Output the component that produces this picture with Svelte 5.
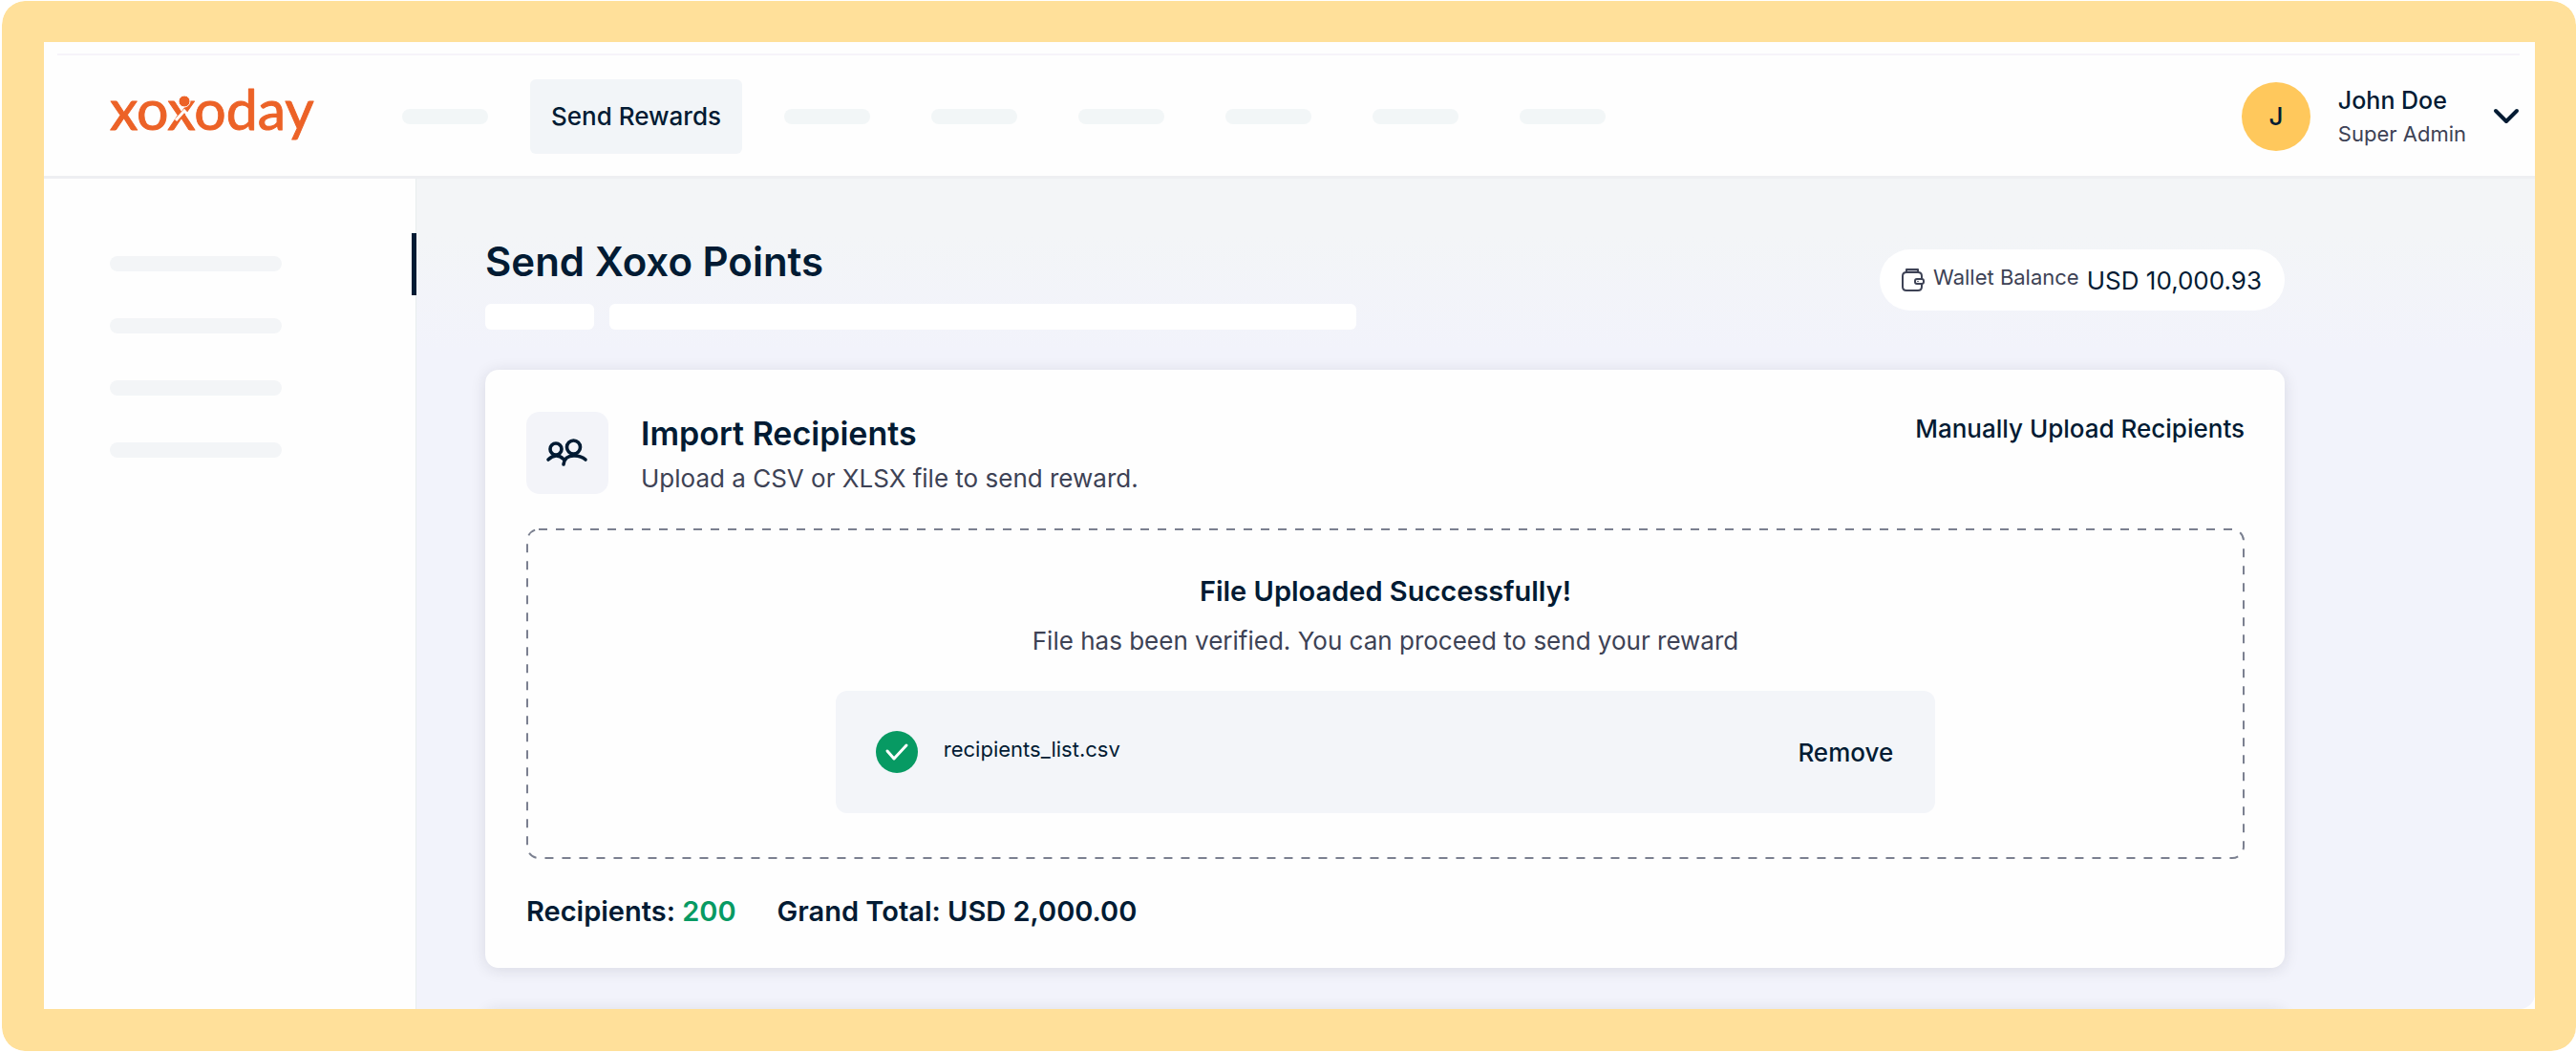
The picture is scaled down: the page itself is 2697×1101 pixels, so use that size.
<script>
  const user = { name: 'John Doe', role: 'Super Admin', initial: 'J' };
  const wallet = { label: 'Wallet Balance', amount: 'USD 10,000.93' };

  const navItems = [
    { id: 1 },
    { id: 2, label: 'Send Rewards' },
    { id: 3 },
    { id: 4 },
    { id: 5 },
    { id: 6 },
    { id: 7 },
    { id: 8 }
  ];
  const sideItems = [1, 2, 3, 4];

  let file = { name: 'recipients_list.csv' };
  let recipients = 200;
  let grandTotal = 'USD 2,000.00';
</script>

<div class="frame">
  <div class="app">
    <div class="top-rule"></div>

    <header class="header">
      <a class="logo" href="/" aria-label="xoxoday">
        <svg width="226" height="90" viewBox="0 0 226 90">
          <text class="wordmark" x="2" y="59">xoxoday</text>
          <path d="M71 49 L80 39 L89 49" class="gap" />
          <circle cx="80" cy="29" r="6" class="head" />
        </svg>
      </a>

      <nav class="nav">
        {#each navItems as item (item.id)}
          {#if item.label}
            <a class="nav-link" href="#send-rewards">{item.label}</a>
          {:else}
            <span class="nav-skeleton"></span>
          {/if}
        {/each}
      </nav>

      <button class="profile" type="button">
        <span class="avatar">{user.initial}</span>
        <span class="profile-text">
          <span class="profile-name">{user.name}</span>
          <span class="profile-role">{user.role}</span>
        </span>
        <svg class="chevron" width="28" height="18" viewBox="0 0 28 18">
          <path d="M3 3 L14 14 L25 3" />
        </svg>
      </button>
    </header>

    <div class="body">
      <aside class="sidebar">
        {#each sideItems as item (item)}
          <span class="side-skeleton" class:active={item === 1}></span>
        {/each}
      </aside>

      <main class="content">
        <div class="page-head">
          <div class="page-heading">
            <h1>Send Xoxo Points</h1>
            <div class="crumbs">
              <span class="crumb short"></span>
              <span class="crumb long"></span>
            </div>
          </div>

          <div class="wallet">
            <svg class="wallet-icon" width="26" height="26" viewBox="0 0 26 26">
              <rect class="flap" x="6" y="2" width="12" height="3" />
              <path d="M22 12 V9 Q22 5 18 5 H6 Q2 5 2 9 V20 Q2 24 6 24 H18 Q22 24 22 20 V17" />
              <rect x="15" y="12" width="9" height="5" rx="2" />
              <circle class="dot" cx="18" cy="14.5" r="0.8" />
            </svg>
            <span class="wallet-label">{wallet.label}</span>
            <span class="wallet-amount">{wallet.amount}</span>
          </div>
        </div>

        <section class="card">
          <div class="card-head">
            <div class="card-icon">
              <svg width="46" height="34" viewBox="0 0 46 34">
                <circle cx="11" cy="13" r="6" />
                <circle cx="29.5" cy="11" r="7" />
                <path d="M3 24 Q11 16 19 23.5" />
                <path d="M19 29 Q20 20 29.5 20 Q37 19.5 42 24" />
              </svg>
            </div>
            <div class="card-titles">
              <h2>Import Recipients</h2>
              <p>Upload a CSV or XLSX file to send reward.</p>
            </div>
            <a class="manual-link" href="#manual">Manually Upload Recipients</a>
          </div>

          <div class="dropzone">
            <svg class="dashes" aria-hidden="true">
              <rect x="1" y="1" rx="12" />
            </svg>
            <h3>File Uploaded Successfully!</h3>
            <p>File has been verified. You can proceed to send your reward</p>
            <div class="file-row">
              <svg class="check" width="44" height="44" viewBox="0 0 44 44">
                <circle cx="22" cy="22" r="22" />
                <path d="M12 21 L19 29 L32 15" />
              </svg>
              <span class="file-name">{file.name}</span>
              <button class="remove" type="button">Remove</button>
            </div>
          </div>

          <div class="totals">
            <span>Recipients: <span class="count">{recipients}</span></span>
            <span>Grand Total: {grandTotal}</span>
          </div>
        </section>

        <div class="next-card"></div>
      </main>
    </div>
  </div>
</div>

<style>
  :global(body) {
    background: #fff;
  }

  .frame {
    box-sizing: border-box;
    min-height: 100vh;
    padding: 43px 43px 44px 44px;
    border: 1px solid #fff;
    border-left-width: 2px;
    border-right-width: 0;
    border-radius: 26px;
    background: #ffe09a;
    background-clip: padding-box;
    display: flex;
    font-family: Inter, 'Liberation Sans', sans-serif;
    color: #021b33;
  }

  .app {
    flex: 1;
    min-width: 0;
    display: flex;
    flex-direction: column;
    background: #fefefe;
    overflow: hidden;
  }

  .top-rule {
    height: 2px;
    margin: 12px 16px 0 14px;
    background: #f6f3fa;
  }

  /* Header */
  .header {
    display: flex;
    align-items: center;
    height: 124px;
    padding: 2px 16px 0 67px;
    border-bottom: 3px solid #eeeff2;
  }

  .logo {
    display: flex;
    margin-right: 82px;
  }

  .wordmark {
    font-family: Lato, sans-serif;
    font-size: 59px;
    fill: #ec6227;
    stroke: #ec6227;
    stroke-width: 1px;
    stroke-linejoin: round;
  }

  .gap {
    fill: none;
    stroke: #fefefe;
    stroke-width: 3px;
  }

  .head {
    fill: #ec6227;
    stroke: #fefefe;
    stroke-width: 1px;
  }

  .nav {
    display: flex;
    align-items: center;
    gap: 64px;
    flex: 1;
  }

  .nav-skeleton {
    width: 90px;
    height: 16px;
    border-radius: 8px;
    background: #f2f6f7;
  }

  .nav-link {
    margin: 0 -20px;
    padding: 0 22px;
    border-radius: 6px;
    background: #f2f5f8;
    color: inherit;
    font-size: 26px;
    font-weight: 500;
    line-height: 78px;
    text-decoration: none;
    white-space: nowrap;
  }

  .profile {
    display: flex;
    align-items: center;
    padding: 0;
    border: 0;
    background: none;
    color: inherit;
    font-family: inherit;
    text-align: left;
    cursor: pointer;
  }

  .avatar {
    width: 72px;
    height: 72px;
    margin-right: 29px;
    border-radius: 50%;
    background: #ffc85c;
    font-size: 26px;
    font-weight: 500;
    line-height: 72px;
    text-align: center;
  }

  .profile-text {
    display: flex;
    flex-direction: column;
    margin-right: 28px;
  }

  .profile-name {
    font-size: 25px;
    font-weight: 500;
    line-height: 36px;
  }

  .profile-role {
    color: #3d4255;
    font-size: 22px;
    line-height: 34px;
  }

  .chevron path {
    fill: none;
    stroke: #021b33;
    stroke-width: 4px;
    stroke-linecap: round;
    stroke-linejoin: round;
  }

  /* Body */
  .body {
    flex: 1;
    display: flex;
  }

  .sidebar {
    box-sizing: border-box;
    width: 390px;
    flex-shrink: 0;
    display: flex;
    flex-direction: column;
    gap: 49px;
    padding: 81px 0 0 69px;
    border-right: 1px solid #e8eeee;
  }

  .side-skeleton {
    position: relative;
    height: 16px;
    margin-right: 140px;
    border-radius: 8px;
    background: #f3f5f7;
  }

  .side-skeleton.active::after {
    content: '';
    position: absolute;
    right: -141px;
    top: -24px;
    width: 5px;
    height: 65px;
    background: #021b33;
  }

  .content {
    flex: 1;
    min-width: 0;
    padding: 63px 262px 0 72px;
    border-bottom-right-radius: 16px;
    background: linear-gradient(#f3f5f7 60px, #f2f3fb 180px);
    overflow: hidden;
  }

  .page-head {
    display: flex;
    justify-content: space-between;
    align-items: flex-start;
    margin-bottom: 42px;
  }

  h1,
  h2,
  h3,
  p {
    margin: 0;
  }

  h1 {
    font-size: 42px;
    font-weight: 600;
    line-height: 48px;
  }

  .crumbs {
    display: flex;
    gap: 16px;
    margin-top: 20px;
  }

  .crumb {
    height: 27px;
    border-radius: 6px;
    background: #fff;
  }

  .crumb.short {
    width: 114px;
  }

  .crumb.long {
    width: 782px;
  }

  .wallet {
    display: flex;
    align-items: center;
    height: 64px;
    margin-top: 11px;
    padding: 0 24px 0 22px;
    border-radius: 32px;
    background: #fff;
  }

  .wallet-icon {
    margin-right: 8px;
    fill: none;
    stroke: #3d4255;
    stroke-width: 2px;
    stroke-linejoin: round;
  }

  .wallet-icon .flap {
    fill: #b4b7c2;
  }

  .wallet-icon .dot {
    fill: #3d4255;
    stroke: none;
  }

  .wallet-label {
    margin: 0 8px 6px 0;
    color: #3d4255;
    font-size: 22px;
  }

  .wallet-amount {
    font-size: 26px;
  }

  /* Import card */
  .card {
    padding: 44px 42px 36px 43px;
    border-radius: 14px;
    background: #fefefe;
    box-shadow: 0 2px 16px rgba(30, 35, 50, 0.12);
  }

  .card-head {
    display: flex;
    align-items: flex-start;
    margin-bottom: 28px;
  }

  .card-icon {
    width: 86px;
    height: 86px;
    margin-right: 34px;
    border-radius: 14px;
    background: #f3f4f9;
    display: flex;
    align-items: center;
    justify-content: center;
  }

  .card-icon svg {
    fill: none;
    stroke: #021b33;
    stroke-width: 3.6px;
    stroke-linecap: round;
  }

  .card-titles {
    flex: 1;
  }

  h2 {
    font-size: 34px;
    font-weight: 600;
    line-height: 46px;
  }

  .card-titles p,
  .dropzone p {
    color: #3d4255;
    font-size: 26px;
    line-height: 48px;
  }

  .manual-link {
    color: inherit;
    font-size: 26px;
    font-weight: 500;
    line-height: 36px;
    text-decoration: none;
  }

  .dropzone {
    position: relative;
    display: flex;
    flex-direction: column;
    align-items: center;
    padding: 46px 0 48px;
  }

  .dashes {
    position: absolute;
    inset: 0;
    width: 100%;
    height: 100%;
    pointer-events: none;
  }

  .dashes rect {
    width: calc(100% - 2px);
    height: calc(100% - 2px);
    fill: none;
    stroke: #7b8090;
    stroke-width: 2px;
    stroke-dasharray: 9 9;
  }

  h3 {
    font-size: 29px;
    font-weight: 600;
    line-height: 40px;
  }

  .dropzone p {
    margin-top: 8px;
  }

  .file-row {
    box-sizing: border-box;
    width: 64%;
    height: 128px;
    margin-top: 28px;
    padding: 0 44px 0 42px;
    border-radius: 12px;
    background: #f3f5f9;
    display: flex;
    align-items: center;
  }

  .check {
    margin-right: 27px;
  }

  .check circle {
    fill: #079a63;
  }

  .check path {
    fill: none;
    stroke: #fff;
    stroke-width: 3px;
    stroke-linecap: round;
    stroke-linejoin: round;
  }

  .file-name {
    flex: 1;
    margin-bottom: 6px;
    font-size: 22px;
  }

  .remove {
    padding: 0;
    border: 0;
    background: none;
    color: inherit;
    font-family: inherit;
    font-size: 26px;
    font-weight: 500;
    cursor: pointer;
  }

  .totals {
    display: flex;
    gap: 43px;
    margin-top: 32px;
    font-size: 29px;
    font-weight: 600;
    line-height: 46px;
  }

  .count {
    color: #079a63;
  }

  /* Only the top shadow of the card that follows shows above the fold */
  .next-card {
    height: 20px;
    margin: 43px 0 -20px;
    border-radius: 14px;
    background: #fefefe;
    box-shadow: 0 2px 16px rgba(30, 35, 50, 0.12);
  }
</style>
